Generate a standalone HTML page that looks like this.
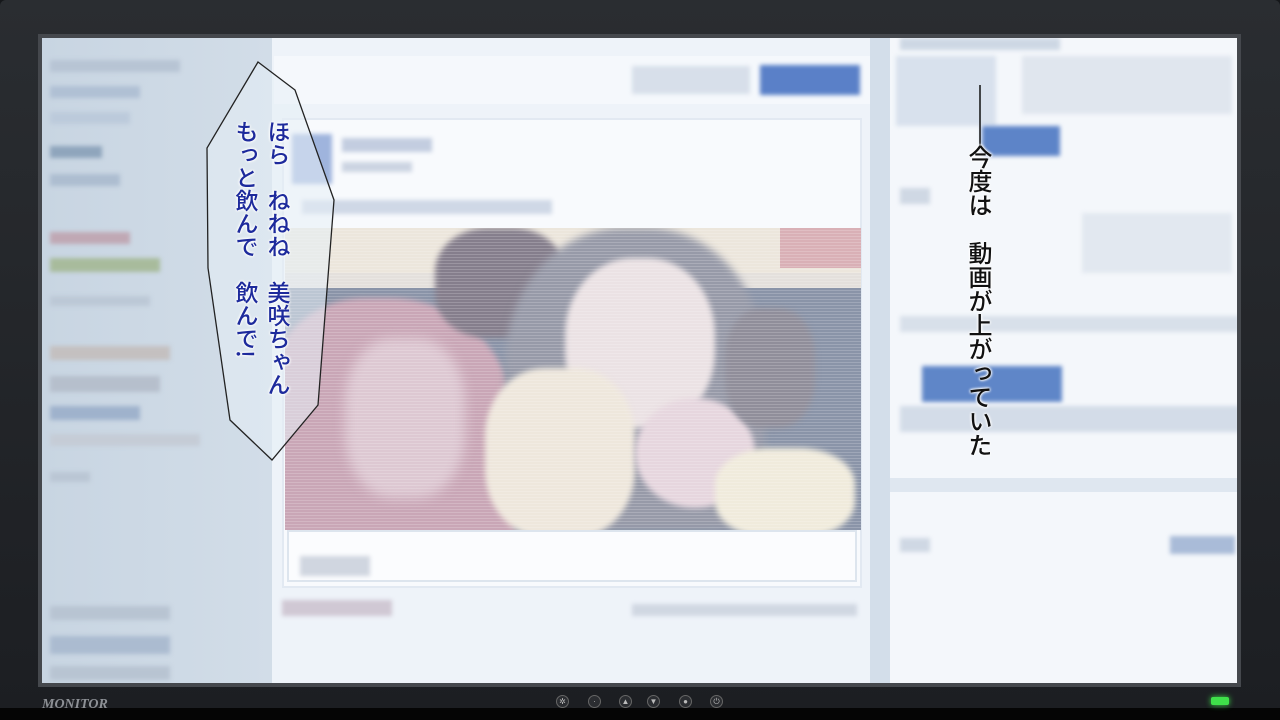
<!DOCTYPE html>
<html><head><meta charset="utf-8"><style>
*{margin:0;padding:0;box-sizing:border-box}
body{width:1280px;height:720px;overflow:hidden;background:#15171a;position:relative;font-family:"Liberation Sans","Noto Sans CJK JP",sans-serif}
.a{position:absolute}
.bz{background:linear-gradient(#2a2d31,#1c1e22);}
.b{position:absolute;filter:blur(2px)}
.v{writing-mode:vertical-rl;position:absolute;font-family:"Noto Sans CJK JP",sans-serif;font-weight:500;white-space:nowrap}
.btn{position:absolute;top:695px;width:13px;height:13px;border-radius:50%;background:#2b2d31;border:1px solid #666;color:#bbb;font-size:8px;text-align:center;line-height:11px}
</style></head><body>
<div class="a bz" style="left:0;top:0;width:1280px;height:720px;border-radius:6px"></div>
<div class="a" style="left:0;top:708px;width:1280px;height:12px;background:#050505"></div>
<div class="a" style="left:38px;top:34px;width:1203px;height:653px;background:#45484d"></div>
<div class="a" style="left:42px;top:38px;width:1195px;height:645px;background:#eef3f9;overflow:hidden">
  <div class="a" style="left:0;top:0;width:230px;height:645px;background:linear-gradient(90deg,#c8d5e2,#d2dde8)"></div>
  <div class="a" style="left:230px;top:0;width:598px;height:645px;background:#eef3f9"></div>
  <div class="a" style="left:232px;top:18px;width:596px;height:48px;background:#f5f8fc"></div>
  <div class="a" style="left:828px;top:0;width:20px;height:645px;background:#d3deea"></div>
  <div class="a" style="left:848px;top:0;width:347px;height:645px;background:#f4f7fb"></div>
  <div class="a" style="left:848px;top:440px;width:347px;height:14px;background:#dfe7f0"></div>
  <div class="a" style="left:240px;top:80px;width:580px;height:470px;background:#f8fafd;border:2px solid #e2e9f2"></div>
  <div class="a" style="left:245px;top:492px;width:570px;height:52px;background:#fbfcfe;border:2px solid #dde5ee"></div>
  <div class="b" style="left:8px;top:22px;width:130px;height:12px;background:#b7c4d4"></div>
  <div class="b" style="left:8px;top:48px;width:90px;height:12px;background:#b0c0d4"></div>
  <div class="b" style="left:8px;top:74px;width:80px;height:12px;background:#bccadb"></div>
  <div class="b" style="left:8px;top:108px;width:52px;height:12px;background:#8fa5bc"></div>
  <div class="b" style="left:8px;top:136px;width:70px;height:12px;background:#adbdd0"></div>
  <div class="b" style="left:8px;top:194px;width:80px;height:12px;background:#c0a8b4"></div>
  <div class="b" style="left:8px;top:220px;width:110px;height:14px;background:#a8bb9c"></div>
  <div class="b" style="left:8px;top:258px;width:100px;height:10px;background:#bcc8d6"></div>
  <div class="b" style="left:8px;top:308px;width:120px;height:14px;background:#c4c0c0"></div>
  <div class="b" style="left:8px;top:338px;width:110px;height:16px;background:#b6bfcc"></div>
  <div class="b" style="left:8px;top:368px;width:90px;height:14px;background:#9fb2cc"></div>
  <div class="b" style="left:8px;top:396px;width:150px;height:12px;background:#c5ccd6"></div>
  <div class="b" style="left:8px;top:434px;width:40px;height:10px;background:#bac6d4"></div>
  <div class="b" style="left:8px;top:568px;width:120px;height:14px;background:#b8c4d2"></div>
  <div class="b" style="left:8px;top:598px;width:120px;height:18px;background:#abbbd0"></div>
  <div class="b" style="left:8px;top:628px;width:120px;height:14px;background:#b8c4d2"></div>
  <div class="b" style="left:590px;top:28px;width:118px;height:28px;background:#d7dfea"></div>
  <div class="b" style="left:718px;top:27px;width:100px;height:30px;background:#5a80c8"></div>
  <div class="b" style="left:250px;top:96px;width:40px;height:50px;background:#9fb4dd"></div>
  <div class="b" style="left:300px;top:100px;width:90px;height:14px;background:#c3cde0"></div>
  <div class="b" style="left:300px;top:124px;width:70px;height:10px;background:#ccd4e2"></div>
  <div class="b" style="left:260px;top:162px;width:250px;height:14px;background:#cfd8e6"></div>
  <div class="b" style="left:258px;top:518px;width:70px;height:20px;background:#d0d6e0"></div>
  <div class="b" style="left:240px;top:562px;width:110px;height:16px;background:#d0c8d4"></div>
  <div class="b" style="left:590px;top:566px;width:225px;height:12px;background:#d0d7e2"></div>
  <div class="b" style="left:858px;top:0;width:160px;height:12px;background:#cdd7e4"></div>
  <div class="b" style="left:854px;top:18px;width:100px;height:70px;background:#d8e1ed"></div>
  <div class="b" style="left:980px;top:18px;width:210px;height:58px;background:#e0e6ee"></div>
  <div class="b" style="left:940px;top:88px;width:78px;height:30px;background:#5d84c8"></div>
  <div class="b" style="left:858px;top:150px;width:30px;height:16px;background:#cfd8e4"></div>
  <div class="b" style="left:1040px;top:175px;width:150px;height:60px;background:#e2e8f0"></div>
  <div class="b" style="left:858px;top:278px;width:340px;height:16px;background:#d8e0ea"></div>
  <div class="b" style="left:880px;top:328px;width:140px;height:36px;background:#5f86c8"></div>
  <div class="b" style="left:858px;top:368px;width:340px;height:26px;background:#d3dce8"></div>
  <div class="b" style="left:858px;top:500px;width:30px;height:14px;background:#cfd8e4"></div>
  <div class="b" style="left:1128px;top:498px;width:65px;height:18px;background:#a9bbd8"></div>
</div>
<div class="a" style="left:285px;top:228px;width:576px;height:302px;overflow:hidden;background:#e4e0dc">
  <div class="a" style="left:0;top:0;width:576px;height:45px;background:#ece6dc"></div>
  <div class="a" style="left:495px;top:0;width:81px;height:40px;background:#d9b0b6"></div>
  <div class="a" style="left:0;top:60px;width:576px;height:242px;background:#8a94a8"></div>
  <div class="a" style="left:-20px;top:70px;width:250px;height:250px;border-radius:40% 50% 0 0;background:#c9a6b6;filter:blur(3px)"></div>
  <div class="a" style="left:60px;top:110px;width:120px;height:160px;border-radius:40%;background:#ddc8d2;filter:blur(6px)"></div>
  <div class="a" style="left:150px;top:0px;width:130px;height:110px;border-radius:40%;background:#857e8c;filter:blur(3px)"></div>
  <div class="a" style="left:220px;top:0;width:260px;height:302px;border-radius:45% 45% 20% 20%;background:#979aa8;filter:blur(4px)"></div>
  <div class="a" style="left:280px;top:30px;width:150px;height:170px;border-radius:45%;background:#ebe2e4;filter:blur(3px)"></div>
  <div class="a" style="left:200px;top:140px;width:150px;height:170px;border-radius:40%;background:#eee7dc;filter:blur(3px)"></div>
  <div class="a" style="left:350px;top:170px;width:120px;height:110px;border-radius:50%;background:#e6d6de;filter:blur(3px)"></div>
  <div class="a" style="left:440px;top:80px;width:90px;height:120px;border-radius:40%;background:#908e9a;filter:blur(3px)"></div>
  <div class="a" style="left:430px;top:220px;width:140px;height:90px;border-radius:40%;background:#f0ebdc;filter:blur(3px)"></div>
  <div class="a" style="left:0;top:0;width:576px;height:302px;background:repeating-linear-gradient(#0000 0 2px,rgba(255,255,255,.18) 2px 3px)"></div>
</div>
<svg class="a" style="left:0;top:0" width="1280" height="720">
  <polygon points="258,62 295,90 334,200 318,405 272,460 230,420 208,268 207,148" fill="rgba(230,238,246,.55)" stroke="#222" stroke-width="1.3"/>
  <line x1="980" y1="85" x2="980" y2="147" stroke="#111" stroke-width="1.5"/>
  <text x="42" y="708" fill="#8d9095" font-family="Liberation Serif" font-weight="bold" font-style="italic" font-size="14">MONITOR</text>
</svg>
<div class="v" style="left:265px;top:120px;font-size:23px;line-height:28px;color:#1d2a9c;text-shadow:0 0 3px #fff,0 0 3px #fff,0 0 2px #fff">ほら　ねねね　美咲ちゃん</div>
<div class="v" style="left:233px;top:120px;font-size:23px;line-height:28px;color:#1d2a9c;text-shadow:0 0 3px #fff,0 0 3px #fff,0 0 2px #fff">もっと飲んで　飲んで!</div>
<div class="v" style="left:966px;top:145px;font-size:24px;line-height:28px;color:#111;text-shadow:0 0 3px #fff,0 0 3px #fff,0 0 2px #fff">今度は　動画が上がっていた</div>
<div class="btn" style="left:556px">✲</div>
<div class="btn" style="left:588px">·</div>
<div class="btn" style="left:619px">▲</div>
<div class="btn" style="left:647px">▼</div>
<div class="btn" style="left:679px">●</div>
<div class="btn" style="left:710px">⏻</div>
<div class="a" style="left:1211px;top:697px;width:18px;height:8px;border-radius:2px;background:#3fe04a;box-shadow:0 0 6px #3fe04a"></div>
</body></html>
